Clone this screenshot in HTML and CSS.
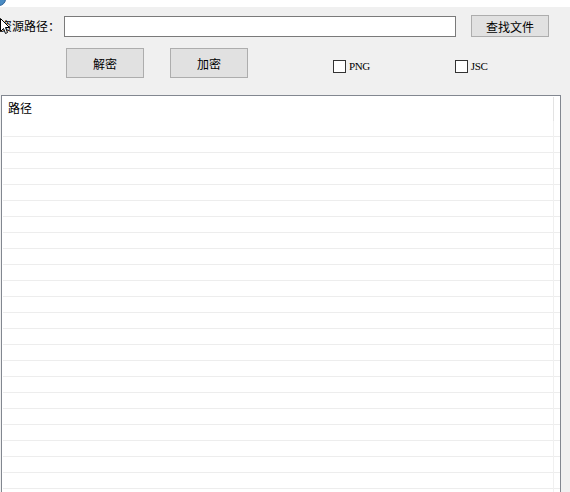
FILE: index.html
```html
<!DOCTYPE html>
<html lang="zh">
<head>
<meta charset="utf-8">
<title>资源工具</title>
<link rel="stylesheet" href="styles.css">
</head>
<body>
<div class="topstrip">
  <span class="appicon"></span>
</div>
<div class="panel">
  <div class="row1">
    <label class="pathlabel">资源路径：</label>
    <input class="pathinput" type="text">
    <button class="btn btn-find">查找文件</button>
  </div>
  <div class="row2">
    <button class="btn btn-big">解密</button>
    <button class="btn btn-big">加密</button>
    <label class="check check-png"><span class="box"></span><span class="check-text">PNG</span></label>
    <label class="check check-jsc"><span class="box"></span><span class="check-text">JSC</span></label>
  </div>
</div>
<div class="listview">
  <div class="lv-header">
    <div class="lv-col">路径</div>
  </div>
  <div class="lv-rows"></div>
</div>
<svg class="cursor" width="11" height="17" viewBox="0 0 11 17">
  <path d="M0.5 0.5 L0.5 13.5 L3.5 10.5 L5.5 15.5 L7.5 14.5 L5.5 9.5 L9.5 9.5 Z" fill="#fff" stroke="#000" stroke-width="1"/>
</svg>
</body>
</html>
```
FILE: styles.css
```css
html, body {
  margin: 0;
  padding: 0;
}
body {
  width: 570px;
  height: 492px;
  overflow: hidden;
  background: #f0f0f0;
  font-family: "Noto Sans CJK SC", "Liberation Sans", sans-serif;
  font-size: 12px;
  color: #000;
  position: relative;
}
.topstrip {
  height: 7px;
  background: #fff;
  position: relative;
  overflow: hidden;
}
.appicon {
  position: absolute;
  left: -8px;
  top: -8px;
  width: 12px;
  height: 12px;
  border-radius: 50%;
  background: #4a8cc4;
  border: 1px solid #2a5f95;
}
.panel {
  box-sizing: border-box;
  height: 88px;
  padding-top: 8px;
}
.row1 {
  display: flex;
  align-items: center;
  height: 22px;
}
.pathlabel {
  width: 60px;
  margin-left: 0;
  margin-right: 4px;
  line-height: 22px;
  white-space: nowrap;
}
.pathinput {
  box-sizing: border-box;
  width: 392px;
  height: 21px;
  margin: 0;
  padding: 0 3px;
  border: 1px solid #7a7a7a;
  background: #fff;
  outline: none;
}
.btn {
  box-sizing: border-box;
  margin: 0;
  padding: 0;
  background: #e1e1e1;
  border: 1px solid #adadad;
  font-family: "Noto Sans CJK SC", "Liberation Sans", sans-serif;
  font-size: 12px;
  color: #000;
}
.btn-find {
  width: 78px;
  height: 22px;
  margin-left: 15px;
}
.row2 {
  display: flex;
  align-items: flex-start;
  margin-top: 11px;
}
.btn-big {
  width: 78px;
  height: 30px;
  margin-left: 66px;
}
.btn-big + .btn-big {
  margin-left: 26px;
}
.check {
  display: flex;
  align-items: center;
  margin-top: 12px;
  line-height: 13px;
}
.check-text {
  font-family: "Liberation Serif", serif;
  font-size: 11px;
  letter-spacing: -0.4px;
  font-weight: normal;
}
.check-png {
  margin-left: 85px;
}
.check-jsc {
  margin-left: 85px;
}
.box {
  box-sizing: border-box;
  width: 13px;
  height: 13px;
  border: 1px solid #333;
  background: #fff;
  margin-right: 3px;
}
.listview {
  box-sizing: border-box;
  width: 560px;
  height: 397px;
  margin-left: 1px;
  border: 1px solid #828790;
  border-bottom: none;
  background: #fff;
  padding: 1px 0 0 1px;
  overflow: hidden;
}
.lv-header {
  display: flex;
  height: 24px;
}
.lv-col {
  box-sizing: border-box;
  width: 551px;
  border-right: 1px solid #e3e3e3;
  padding: 4px 0 0 5px;
  line-height: 14px;
}
.lv-rows {
  height: 400px;
  background-image:
    linear-gradient(to right, transparent 550px, #f0f0f0 550px, #f0f0f0 551px, transparent 551px),
    repeating-linear-gradient(to bottom, transparent 0, transparent 15px, #ededed 15px, #ededed 16px);
}
.cursor {
  position: absolute;
  left: 0;
  top: 18px;
}
```
